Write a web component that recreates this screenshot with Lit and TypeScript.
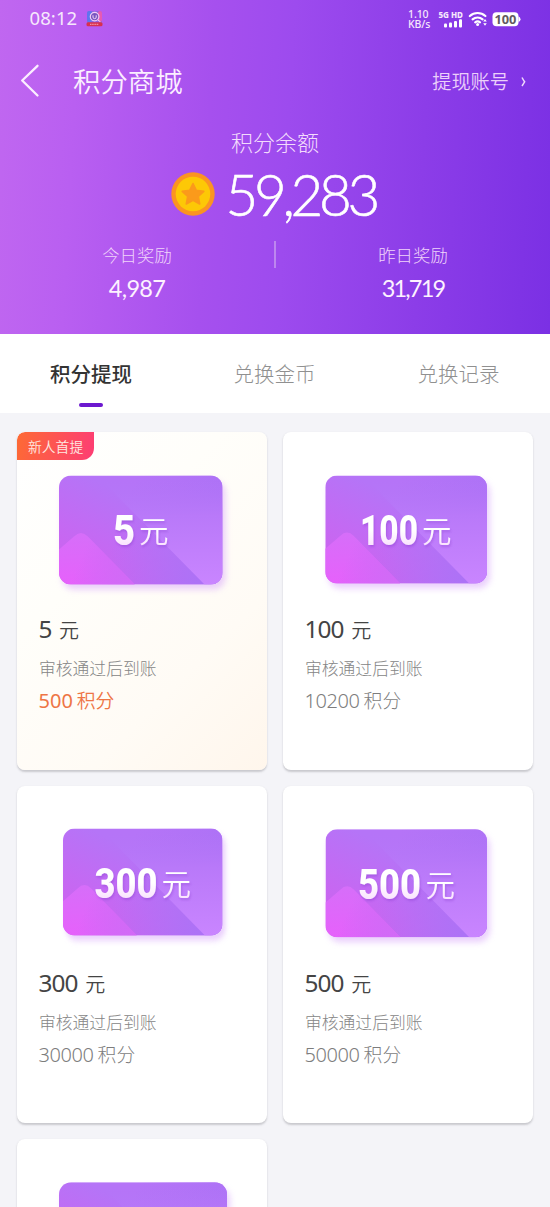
import { LitElement, html, css, svg, nothing } from "lit";
import { customElement, property, state } from "lit/decorators.js";
import { classMap } from "lit/directives/class-map.js";

interface Art {
  x: number;
  y: number;
  w: number;
  h: number;
  tx: number;
  tw: number;
  ux: number;
}

interface Offer {
  amount?: string;
  points?: string;
  badge?: string;
  art: Art;
}

const OFFERS: Offer[] = [
  { amount: "5", points: "500", badge: "新人首提", art: { x: 42, y: 43.5, w: 163.5, h: 109, tx: 96, tw: 22, ux: 121.5 } },
  { amount: "100", points: "10200", art: { x: 42.3, y: 43.5, w: 161.7, h: 108, tx: 77, tw: 58, ux: 138.5 } },
  { amount: "300", points: "30000", art: { x: 46, y: 42.5, w: 159.4, h: 107, tx: 77.5, tw: 63, ux: 144 } },
  { amount: "500", points: "50000", art: { x: 42.5, y: 43.2, w: 161.5, h: 108, tx: 75, tw: 63, ux: 142 } },
  { art: { x: 42, y: 43.2, w: 168, h: 112, tx: 0, tw: 0, ux: 0 } },
];

@customElement("status-bar")
export class StatusBar extends LitElement {
  static styles = css`
    :host { display: flex; height: 38px; padding: 0 29px 0 29.5px; box-sizing: border-box; align-items: center; color: #f6e8fc; }
    .time { font: 400 18.5px/36px "Noto Sans", sans-serif; width: 50px; height: 38px; white-space: nowrap; letter-spacing: 0.1px; }
    .app { margin-left: 6px; }
    .right { margin-left: auto; display: flex; align-items: center; }
    .speed { width: 23px; white-space: nowrap; font: 500 10.5px/10px "Noto Sans", sans-serif; display: flex; flex-direction: column; letter-spacing: -0.1px; }
    .cell { margin-left: 5px; display: flex; flex-direction: column; align-items: flex-end; width: 27px; }
    .net { font: 800 8px/9px "Noto Sans", sans-serif; white-space: nowrap; }
    .wifi { margin-left: 5px; }
    .battery { margin-left: 4px; }
    svg { display: block; }
  `;

  render() {
    return html`
      <span class="time">08:12</span>
      <svg class="app" width="18" height="16" viewBox="0 0 18 16">
        <rect x="1" y="0" width="15" height="15" rx="3" fill="#8f63df" />
        <rect x="1" y="0" width="5" height="11" rx="2" fill="#5f75ee" />
        <rect x="12" y="0" width="4" height="11" rx="2" fill="#e65ab4" />
        <circle cx="8.6" cy="5.6" r="4.3" fill="#7a55c0" stroke="#f0cdf4" stroke-width="1.2" />
        <path d="M7 4.3v1.8a1.6 1.6 0 0 0 3.2 0V4.3M12 9l2.4 1.8" fill="none" stroke="#f3dcf8" stroke-width="1" />
        <rect x="0.5" y="11.3" width="16" height="4" rx="1.5" fill="#d8304f" />
        <path d="M4 13.3h9" stroke="#f7a7b6" stroke-width="1" stroke-dasharray="1.5 .7" />
      </svg>
      <div class="right">
        <div class="speed"><span>1.10</span><span>KB/s</span></div>
        <div class="cell">
          <span class="net">5G HD</span>
          <svg width="20" height="9" viewBox="0 0 20 9" fill="#fff">
            <rect x="1" y="4.5" width="3" height="4" rx="1" />
            <rect x="6" y="3.6" width="3" height="4.9" rx="1" />
            <rect x="11" y="2" width="3" height="6.5" rx="1" />
            <rect x="16" y="0.2" width="3" height="8.3" rx="1" />
          </svg>
        </div>
        <svg class="wifi" width="20" height="16" viewBox="0 0 20 16">
          <g fill="none" stroke="#fff" stroke-linecap="round" stroke-width="2.2">
            <path d="M1.8 5a11.6 11.6 0 0 1 15.6 0" />
            <path d="M4.6 8.4a7.6 7.6 0 0 1 10 0" />
            <path d="M7.2 11.4a3.8 3.8 0 0 1 4.8 0" />
          </g>
          <circle cx="9.6" cy="13.4" r="1.5" fill="#fff" />
          <path d="M15.2 10.6l1.8-2.5 1.8 2.5zM15.2 12.3l1.8 2.5 1.8-2.5z" fill="#fff" />
        </svg>
        <svg class="battery" width="29" height="15" viewBox="0 0 29 15">
          <rect x="0.5" y="0.3" width="26" height="14" rx="4" fill="#fff" />
          <path d="M26.5 4.6q2 .4 2 2.7t-2 2.7z" fill="#fff" />
          <text x="2.4" y="12" font-family="Noto Sans, sans-serif" font-weight="700" font-size="12.5" fill="#62595f" textLength="22" lengthAdjust="spacingAndGlyphs">100</text>
        </svg>
      </div>
    `;
  }
}

@customElement("offer-card")
export class OfferCard extends LitElement {
  @property({ attribute: false }) offer!: Offer;

  static styles = css`
    :host { display: block; }
    .card {
      position: relative; height: 100%; box-sizing: border-box; background: #fff; border-radius: 8px;
      box-shadow: 0 1.5px 2px rgba(80, 80, 90, 0.26); overflow: hidden;
      font-family: "Noto Sans", "Noto Sans CJK SC", sans-serif; white-space: nowrap;
    }
    .card.first { background: linear-gradient(135deg, #fff 0%, #fffefa 35%, #fffbf5 70%, #fff6ec 100%); }
    .badge {
      position: absolute; left: 0; top: 0; width: 77px; height: 28px; box-sizing: border-box; padding-left: 11px;
      border-radius: 8px 0 12px 0; background: linear-gradient(100deg, #fd6a34, #fd3d74); color: #ffe9e2;
      font: 350 13.8px/28px "Noto Sans CJK SC", sans-serif;
    }
    .art { display: block; }
    .body { padding-left: 22px; }
    .amount { height: 32px; line-height: 32px; margin-top: 11px; font-size: 24.4px; color: #444; display: flex; align-items: baseline; letter-spacing: -0.9px; margin-left: -0.5px; }
    .amount .unit { font: 350 20px/32px "Noto Sans CJK SC", sans-serif; margin-left: 7.5px; letter-spacing: 0; }
    .note { font: 300 16.8px/24px "Noto Sans CJK SC", sans-serif; color: #858585; margin-top: 11px; }
    .points { display: flex; align-items: baseline; line-height: 28px; height: 28px; margin: 6px 0 0 -0.5px; font-size: 20px; color: #7d7d7d; font-weight: 300; letter-spacing: -0.4px; }
    .points .unit { font: 300 18.8px/28px "Noto Sans CJK SC", sans-serif; margin-left: 4px; letter-spacing: 0; }
    .first .points { color: #ee7545; font-weight: 400; letter-spacing: 0; }
    .first .points .unit { font-weight: 350; }
  `;

  private art(a: Art, amount?: string) {
    return svg`
      <defs>
        <linearGradient id="base" gradientUnits="userSpaceOnUse" x1="20" y1="109" x2="66" y2="20">
          <stop offset="0" stop-color="#d061ee" /><stop offset="0.5" stop-color="#c36af3" /><stop offset="1" stop-color="#b574f7" />
        </linearGradient>
        <linearGradient id="edge" gradientUnits="userSpaceOnUse" x1="56" y1="60" x2="145" y2="90">
          <stop offset="0" stop-color="#ae72f6" stop-opacity="0" /><stop offset="1" stop-color="#ad72f6" />
        </linearGradient>
        <linearGradient id="hill" x1="0.2" y1="0" x2="0.1" y2="1">
          <stop offset="0" stop-color="#d66ef9" /><stop offset="1" stop-color="#e661fb" />
        </linearGradient>
        <linearGradient id="fade" x1="0" y1="0" x2="1" y2="0.3">
          <stop offset="0.4" stop-color="#c76af5" stop-opacity="0" /><stop offset="1" stop-color="#cf6bf6" stop-opacity="0.85" />
        </linearGradient>
        <linearGradient id="light" gradientUnits="userSpaceOnUse" x1="0" y1="4" x2="0" y2="109">
          <stop offset="0" stop-color="#b476f8" stop-opacity="0" /><stop offset="0.35" stop-color="#b979f9" /><stop offset="1" stop-color="#c985ff" />
        </linearGradient>
        <linearGradient id="ink" gradientUnits="userSpaceOnUse" x1="0" y1=${a.y + 38} x2="0" y2=${a.y + 70}>
          <stop offset="0.5" stop-color="#fff" /><stop offset="1" stop-color="#fae2fe" />
        </linearGradient>
        <filter id="glow" x="-20%" y="-20%" width="140%" height="150%"><feGaussianBlur stdDeviation="3" /></filter>
        <filter id="ts" x="-20%" y="-20%" width="140%" height="150%"><feDropShadow dx="1" dy="2" stdDeviation="1.2" flood-color="#8a3fcf" flood-opacity="0.4" /></filter>
        <clipPath id="clip"><rect width="164" height="109" rx="12" /></clipPath>
      </defs>
      <g transform="translate(${a.x} ${a.y}) scale(${a.w / 164} ${a.h / 109})">
        <rect x="3" y="5" width="164" height="109" rx="12" fill="#d9a8fa" opacity="0.55" filter="url(#glow)" />
        <g clip-path="url(#clip)">
          <rect width="164" height="109" fill="url(#base)" />
          <rect width="164" height="109" fill="url(#edge)" />
          <path d="M38 0H164V109H146Z" fill="url(#light)" />
          <path d="M0 74L15 61Q22 54 29 61L76 109H0Z" fill="url(#hill)" />
          <path d="M0 74L15 61Q22 54 29 61L76 109H0Z" fill="url(#fade)" />
        </g>
      </g>
      ${amount
        ? svg`<g fill="url(#ink)" filter="url(#ts)">
            <text x=${a.tx} y=${a.y + 69.5} font-family="Roboto, sans-serif" font-weight="800" font-size="42" textLength=${a.tw} lengthAdjust="spacingAndGlyphs">${amount}</text>
            <text x=${a.ux + 0.5} y=${a.y + 66.5} font-family="Noto Sans CJK SC, sans-serif" font-weight="350" font-size="29.5">元</text>
          </g>`
        : nothing}
    `;
  }

  render() {
    const o = this.offer;
    return html`
      <div class=${classMap({ card: true, first: !!o.badge })}>
        <svg class="art" width="250" height="170" viewBox="0 0 250 170">${this.art(o.art, o.amount)}</svg>
        ${o.badge ? html`<span class="badge">${o.badge}</span>` : nothing}
        ${o.amount
          ? html`<div class="body">
              <div class="amount"><span>${o.amount}</span><span class="unit">元</span></div>
              <div class="note">审核通过后到账</div>
              <div class="points"><span>${o.points}</span><span class="unit">积分</span></div>
            </div>`
          : nothing}
      </div>
    `;
  }
}

@customElement("app-root")
export class AppRoot extends LitElement {
  @state() private active = 0;

  static styles = css`
    :host {
      display: block; width: 550px; height: 1207px; overflow: hidden; background: #f4f4f8;
      font-family: "Noto Sans CJK SC", sans-serif; white-space: nowrap;
    }
    .hero {
      height: 333.5px; color: #fff;
      background: linear-gradient(93deg, #c067f0 0%, #b95ff1 14%, #a650ee 38%, #9d4bee 52%, #8c3de8 76%, #7b30e4 100%);
    }
    .nav { display: flex; align-items: center; height: 85px; padding: 0 22px 0 20px; }
    .back { display: block; }
    .title { margin-left: 33px; font-size: 27.4px; font-weight: 350; line-height: 85px; color: #fbeeff; }
    .account { margin-left: auto; display: flex; align-items: center; font-size: 19.2px; font-weight: 350; color: #ecd0fa; }
    .account svg { margin-left: 9px; margin-top: 3px; }
    .label { text-align: center; font-size: 22px; line-height: 32px; color: #f3dcfc; font-weight: 300; margin-top: 2px; }
    .balance { display: flex; align-items: center; height: 72px; padding-left: 171px; margin-top: 1px; }
    .sum { margin-left: 10.5px; font: 300 56.5px/72px Lato, sans-serif; letter-spacing: -4.3px; -webkit-text-stroke: 0.6px #fff; }
    .stats { display: grid; grid-template-columns: 274px 2px 274px; height: 70px; margin-top: 9px; }
    .stat { text-align: center; margin-top: 3px; }
    .stat .name { font-size: 17.4px; line-height: 26px; font-weight: 300; color: #f0d4fa; }
    .stat .num { font: 400 23.5px/34px Lato, sans-serif; letter-spacing: -0.7px; margin-top: 3px; color: #fdf1ff; }
    .stat .num.wide { letter-spacing: -1.8px; }
    .rule { width: 1.5px; height: 27px; background: #bd86ef; margin-top: 2px; }
    .tabs { display: grid; grid-template-columns: 182px 185px 183px; height: 79.5px; background: #fff; }
    .tab { display: flex; flex-direction: column; align-items: center; font-size: 20.5px; line-height: 30px; padding-top: 24.5px; color: #909090; font-weight: 300; }
    .tab.on { color: #333; font-weight: 500; }
    .tab.on::after { content: ""; width: 24px; height: 4.5px; border-radius: 2.5px; background: #6c18cf; margin-top: 14.5px; }
    .list { display: grid; grid-template-columns: 250px 250px; grid-auto-rows: 337.7px; gap: 16px; padding: 19px 17px; }
  `;

  render() {
    const tabs = ["积分提现", "兑换金币", "兑换记录"];
    return html`
      <section class="hero">
        <status-bar></status-bar>
        <nav class="nav">
          <svg class="back" width="20" height="34" viewBox="0 0 20 34"><path d="M17.5 1.8L2.2 16.5L17.5 31.5" fill="none" stroke="#fbeeff" stroke-width="2.3" stroke-linecap="round" stroke-linejoin="round" /></svg>
          <span class="title">积分商城</span>
          <span class="account">提现账号
            <svg width="10" height="12" viewBox="0 0 10 12"><path d="M4 1.5Q5.3 4 6.6 5.8Q5.3 7.8 4 10" fill="none" stroke="#f0dafc" stroke-width="1.5" /></svg>
          </span>
        </nav>
        <div class="label">积分余额</div>
        <div class="balance">
          <svg width="44" height="44" viewBox="0 0 44 44">
            <circle cx="22" cy="22" r="21.7" fill="#fb9422" />
            <circle cx="22" cy="22" r="17.3" fill="#fdc806" />
            <path d="M22 11.5l3.3 6.8 7.5 1-5.5 5.2 1.4 7.5-6.7-3.6-6.7 3.6 1.4-7.5-5.5-5.2 7.5-1z" fill="#fb9a1b" stroke="#fb9a1b" stroke-width="1.6" stroke-linejoin="round" />
          </svg>
          <span class="sum">59,283</span>
        </div>
        <div class="stats">
          <div class="stat"><div class="name">今日奖励</div><div class="num">4,987</div></div>
          <div class="rule"></div>
          <div class="stat"><div class="name">昨日奖励</div><div class="num wide">31,719</div></div>
        </div>
      </section>
      <div class="tabs">
        ${tabs.map((t, i) => html`<div class=${classMap({ tab: true, on: i === this.active })} @click=${() => (this.active = i)}>${t}</div>`)}
      </div>
      <div class="list">${OFFERS.map((o) => html`<offer-card .offer=${o}></offer-card>`)}</div>
    `;
  }
}
